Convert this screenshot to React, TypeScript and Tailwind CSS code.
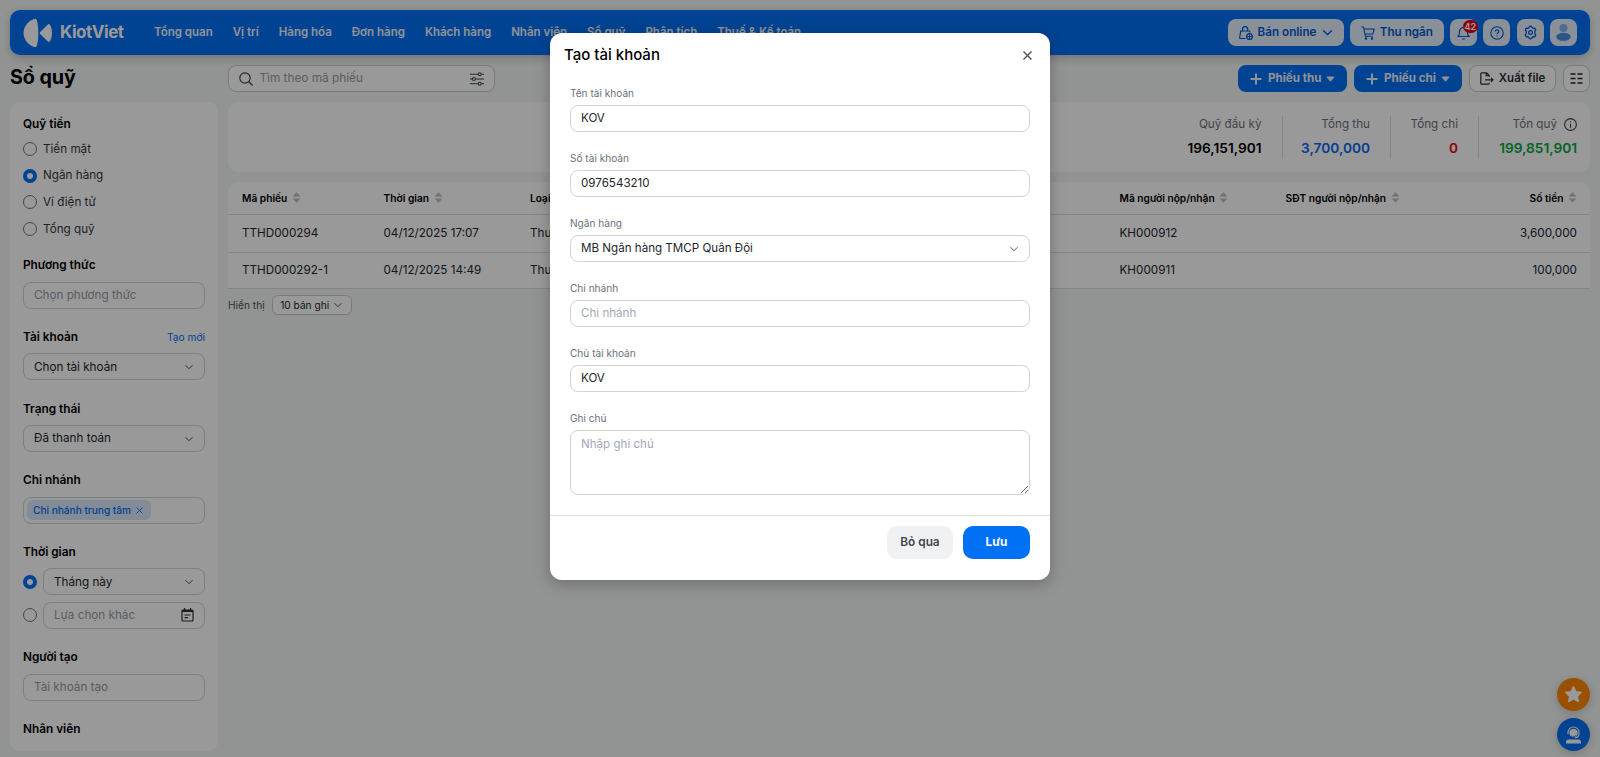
import React from "react";

const navItems = ["Tổng quan", "Vị trí", "Hàng hóa", "Đơn hàng", "Khách hàng", "Nhân viên", "Sổ quỹ", "Phân tích", "Thuế & Kế toán"];

function Chevron({ className = "" }: { className?: string }) {
  return (
    <svg className={"text-[#4b525b] " + className} viewBox="0 0 10 10" width="10" height="10" fill="none" stroke="currentColor" strokeWidth="1">
      <path d="M1.500 3.200 5 6.700l3.500-3.500" />
    </svg>
  );
}

function Logo() {
  return (
    <svg width="30" height="30" viewBox="0 0 30 30" fill="#fff">
      <path d="M12 .8c1 0 1.600.6 1.900 1.600C14.900 6 15.300 10.500 15.300 15s-.4 9-1.400 12.600c-.3 1-.9 1.600-1.900 1.600C6.200 28 .5 22 .5 15S6.200 2 12 .8z" />
      <path d="M17.200 13.900 24.600 6.700c.9-.8 1.900-.8 2.500.2 1.300 2.400 1.900 5.200 1.900 8.100s-.6 5.700-1.900 8.100c-.6 1-1.600 1-2.500.2l-7.400-7.200c-.6-.7-.6-1.500 0-2.200z" />
    </svg>
  );
}

function Sort() {
  return (
    <svg width="9" height="11" viewBox="0 0 9 11" fill="#b9bec5">
      <path d="M4.500.3 8.400 4.600H.6zM4.500 10.700.6 6.400h7.800z" />
    </svg>
  );
}

function Radio({ checked = false }: { checked?: boolean }) {
  return (
    <span
      className={
        checked
          ? "box-border h-[14px] w-[14px] shrink-0 rounded-full border-[4px] border-[#0070f4] bg-white"
          : "box-border h-[14px] w-[14px] shrink-0 rounded-full border border-[#6f7782]"
      }
    />
  );
}

function RadioRow({ label, checked = false }: { label: string; checked?: boolean }) {
  return (
    <div className="flex h-[26.700px] items-center gap-[6px]">
      <Radio checked={checked} />
      <span className="pt-[1px] text-[#33383f]">{label}</span>
    </div>
  );
}

const field = "flex h-[27px] items-center rounded-[8px] border border-[#cfd3d8] px-[10px]";

function Section({ title, action, children }: { title: string; action?: string; children?: React.ReactNode }) {
  return (
    <section className="mb-[18.970px]">
      <div className="mb-[7.700px] flex h-[18px] items-center justify-between pt-[2px]">
        <h3 className="text-[11.800px] font-semibold text-black">{title}</h3>
        {action && <a className="text-[10.200px] text-[#0070f4]">{action}</a>}
      </div>
      {children}
    </section>
  );
}

function HeaderButton({ children, className = "" }: { children: React.ReactNode; className?: string }) {
  return (
    <button className={"relative flex h-[27px] items-center justify-center rounded-[8px] bg-[#e6f1fe] text-[#0058d0] " + className}>
      {children}
    </button>
  );
}

function Header() {
  return (
    <header className="flex h-[45px] items-center rounded-[10px] bg-[#0070f4] px-[13px] shadow-[0_3px_10px_rgba(0,0,0,0.22)]">
      <Logo />
      <span className="ml-[7px] w-[64px] text-[17px] leading-none font-bold tracking-[-0.450px] text-white">KiotViet</span>
      <nav className="ml-[30px] flex gap-[20px] pt-[1px] text-[11.500px] font-semibold whitespace-nowrap text-[#f2f6fb]">
        {navItems.map((n) => (
          <span key={n}>{n}</span>
        ))}
      </nav>
      <div className="ml-auto flex gap-[6.300px] text-[11.670px] font-semibold">
        <HeaderButton className="w-[116px] gap-[5px]">
          <svg width="14" height="14" viewBox="0 0 14 14" fill="none" stroke="currentColor" strokeWidth="1.200">
            <path d="M6.500 12.500H1.600c-.6 0-1-.4-.9-1L1.700 5h8.900l.3 1.500M3.500 5V3.200a2.600 2.600 0 0 1 5.200 0V5" />
            <circle cx="10.500" cy="10.500" r="2.900" />
            <path d="M7.700 10.500h5.600M10.500 7.700v5.600" strokeWidth=".9" />
          </svg>
          <span className="w-[59px] pt-[1px] whitespace-nowrap">Bán online</span>
          <svg width="11" height="11" viewBox="0 0 11 11" fill="none" stroke="currentColor" strokeWidth="1.300">
            <path d="m1.200 3.500 4.300 4 4.300-4" />
          </svg>
        </HeaderButton>
        <HeaderButton className="w-[94px] gap-[5px]">
          <svg width="14" height="14" viewBox="0 0 14 14" fill="none" stroke="currentColor" strokeWidth="1.100">
            <path d="M.3 1h2.200l1.800 9.200h7.500M2.900 3h10.300l-1.300 5H4" />
            <circle cx="5" cy="12.500" r=".7" />
            <circle cx="11" cy="12.500" r=".7" />
          </svg>
          <span className="pt-[1px] whitespace-nowrap">Thu ngân</span>
        </HeaderButton>
        <HeaderButton className="w-[27px]">
          <svg width="13" height="14" viewBox="0 0 13 14" fill="none" stroke="currentColor" strokeWidth="1.200">
            <path d="M1 10.500c1-1 1.500-2 1.500-3.700V5.500a4 4 0 0 1 8 0v1.300c0 1.700.5 2.700 1.500 3.700zM5 13h3" />
          </svg>
          <span className="absolute top-[1px] left-[12.500px] flex h-[13px] w-[15.500px] items-center justify-center rounded-full bg-[#e5000f] text-[9px] font-bold text-white">42</span>
        </HeaderButton>
        <HeaderButton className="w-[27px]">
          <svg width="14" height="14" viewBox="0 0 14 14" fill="none" stroke="currentColor" strokeWidth="1.100">
            <circle cx="7" cy="7" r="6.200" />
            <path d="M5.200 5.600C5.200 4.500 6 3.900 7 3.900s1.800.7 1.800 1.600C8.800 6.800 7 6.800 7 8.300M7 9.400v1.100" />
          </svg>
        </HeaderButton>
        <HeaderButton className="w-[27px]">
          <svg width="15" height="15" viewBox="0 0 24 24" fill="none" stroke="currentColor" strokeWidth="2" strokeLinejoin="round">
            <path d="m9.300 4.500.9-2.300h3.600l.9 2.300 1.500.9 2.500-.4 1.800 3.100L18.900 10v4l1.600 1.900-1.800 3.100-2.500-.4-1.500.9-.9 2.300h-3.600l-.9-2.300-1.500-.9-2.500.4-1.800-3.100L5.100 14v-4L3.500 8.100 5.300 5l2.500.4z" />
            <circle cx="12" cy="12" r="3" />
          </svg>
        </HeaderButton>
        <HeaderButton className="w-[27px]">
          <svg width="17" height="19" viewBox="0 0 17 19">
            <circle cx="8.500" cy="5" r="4" fill="#84b4ee" />
            <ellipse cx="8.500" cy="13.800" rx="7.300" ry="4" fill="#4a90e2" />
          </svg>
        </HeaderButton>
      </div>
    </header>
  );
}

function Plus() {
  return (
    <svg width="12" height="12" viewBox="0 0 12 12" stroke="currentColor" strokeWidth="2">
      <path d="M6 .5v11M.5 6h11" />
    </svg>
  );
}

function Caret() {
  return (
    <svg width="9" height="6" viewBox="0 0 9 6" fill="currentColor" className="ml-auto">
      <path d="M.8.4h7.400c.4 0 .5.400.3.700L5 5.300c-.3.300-.7.300-1 0L.5 1.100C.3.800.4.400.8.400z" />
    </svg>
  );
}

function Toolbar() {
  const primary = "flex h-[27px] items-center rounded-[8px] bg-[#0070f4] px-[12px] text-[11.600px] font-bold whitespace-nowrap text-[#eef4fb]";
  return (
    <div className="mt-[10px] flex h-[27px] items-center">
      <h1 className="w-[218px] pb-[1px] text-[19.800px] leading-none font-bold tracking-[-0.100px] text-black">Sổ quỹ</h1>
      <div className="flex h-[27px] w-[267px] items-center rounded-[8px] border border-[#c8ccd1] bg-white px-[10px] text-[11.800px]">
        <svg width="14" height="14" viewBox="0 0 14 14" fill="none" stroke="#3f454d" strokeWidth="1.200">
          <circle cx="6" cy="6" r="5.200" />
          <path d="m9.800 9.800 3.800 3.700" />
        </svg>
        <span className="ml-[6.500px] pt-[1px] text-[#969ca5]">Tìm theo mã phiếu</span>
        <svg className="ml-auto" width="14" height="14" viewBox="0 0 14 14" fill="none" stroke="#3f454d" strokeWidth="1.100">
          <path d="M0 2.200h8M11.400 2.200H14M0 7h2.300M5.500 7H14M0 11.800h8M11.400 11.800H14" />
          <circle cx="9.700" cy="2.200" r="1.500" />
          <circle cx="3.900" cy="7" r="1.500" />
          <circle cx="9.700" cy="11.800" r="1.500" />
        </svg>
      </div>
      <div className="ml-auto flex gap-[7px]">
        <button className={primary + " w-[109px]"}>
          <Plus />
          <span className="ml-[6px]">Phiếu thu</span>
          <Caret />
        </button>
        <button className={primary + " w-[108px]"}>
          <Plus />
          <span className="ml-[6px]">Phiếu chi</span>
          <Caret />
        </button>
        <button className="flex h-[27px] w-[87px] items-center justify-center gap-[5px] rounded-[8px] border border-[#c8ccd1] bg-white text-[11.600px] font-semibold whitespace-nowrap text-[#2b3037]">
          <svg width="14" height="13" viewBox="0 0 14 13" fill="none" stroke="currentColor" strokeWidth="1.200">
            <path d="M9.200 4.800V3.400L6.600.8H1.800c-.6 0-1 .4-1 1v9.400c0 .6.400 1 1 1h6.400c.6 0 1-.4 1-1v-.5M6.200.8v2.900h3M5 7.800h8M11 5.800l2 2-2 2" />
          </svg>
          Xuất file
        </button>
        <button className="flex h-[27px] w-[27px] items-center justify-center rounded-[8px] border border-[#c8ccd1] bg-white">
          <svg width="13" height="11" viewBox="0 0 13 11" stroke="#22262b" strokeWidth="1.400">
            <path d="M.5 1H5.500M7.500 1h5M.5 5.500h5M7.500 5.500h5M.5 10h5M7.500 10h5" />
          </svg>
        </button>
      </div>
    </div>
  );
}

function Sidebar() {
  return (
    <aside className="h-[649px] w-[208px] overflow-hidden rounded-[10px] bg-white px-[13px] pt-[12.500px] text-[11.700px]">
      <section className="mb-[13.900px]">
        <h3 className="mb-[3px] h-[18px] text-[11.800px] leading-[18px] font-semibold text-black">Quỹ tiền</h3>
        <RadioRow label="Tiền mặt" />
        <RadioRow label="Ngân hàng" checked />
        <RadioRow label="Ví điện tử" />
        <RadioRow label="Tổng quỹ" />
      </section>
      <Section title="Phương thức">
        <div className={field + " text-[#969ca5]"}>
          <span className="pt-[1px]">Chọn phương thức</span>
        </div>
      </Section>
      <Section title="Tài khoản" action="Tạo mới">
        <div className={field + " justify-between text-[#22262b]"}>
          <span className="pt-[1px]">Chọn tài khoản</span>
          <Chevron />
        </div>
      </Section>
      <Section title="Trạng thái">
        <div className={field + " justify-between text-[#22262b]"}>
          <span className="pt-[1px]">Đã thanh toán</span>
          <Chevron />
        </div>
      </Section>
      <Section title="Chi nhánh">
        <div className="flex h-[27px] items-center rounded-[8px] border border-[#cfd3d8] pl-[3px]">
          <span className="flex h-[20px] w-[124px] items-center justify-between rounded-[6px] bg-[#d9e8fb] pr-[8px] pl-[6px] text-[10.100px] font-medium whitespace-nowrap text-[#0070f4]">
            Chi nhánh trung tâm
            <svg className="shrink-0" width="7" height="7" viewBox="0 0 7 7" stroke="currentColor" strokeWidth=".9">
              <path d="m.5.5 6 6M6.500.5l-6 6" />
            </svg>
          </span>
        </div>
      </Section>
      <Section title="Thời gian">
        <div className="flex items-center gap-[6px]">
          <Radio checked />
          <div className={field + " flex-1 justify-between text-[#22262b]"}>
            <span className="pt-[1px]">Tháng này</span>
            <Chevron />
          </div>
        </div>
        <div className="mt-[6.500px] flex items-center gap-[6px]">
          <Radio />
          <div className={field + " flex-1 justify-between text-[#969ca5]"}>
            <span className="pt-[1px]">Lựa chọn khác</span>
            <svg width="13" height="14" viewBox="0 0 13 14" fill="none" stroke="#2b3037" strokeWidth="1.200">
              <path d="M2 2h9c.6 0 1 .4 1 1v9c0 .6-.4 1-1 1H2c-.6 0-1-.4-1-1V3c0-.6.400-1 1-1zM3.500 0v3M9.500 0v3M3.500 7h6M3.500 9.700h3.500" />
              <path d="M1 3h11" strokeWidth="2" />
            </svg>
          </div>
        </div>
      </Section>
      <Section title="Người tạo">
        <div className={field + " text-[#969ca5]"}>
          <span className="pt-[1px]">Tài khoản tạo</span>
        </div>
      </Section>
      <Section title="Nhân viên" />
    </aside>
  );
}

function Summary() {
  const items = [
    { label: "Quỹ đầu kỳ", value: "196,151,901", box: "w-[120px] border-r pr-[20px]", color: "text-black" },
    { label: "Tổng thu", value: "3,700,000", box: "w-[108.500px] border-r pr-[20px]", color: "text-[#0a66f0]" },
    { label: "Tổng chi", value: "0", box: "w-[88px] border-r pr-[20px]", color: "text-[#f0000f]" },
    { label: "Tồn quỹ", value: "199,851,901", box: "w-[111px] pr-[13px]", color: "text-[#00a83a]" },
  ];
  return (
    <div className="flex h-[70px] items-center justify-end rounded-[10px] bg-white">
      {items.map((i) => (
        <div key={i.label} className={"flex h-[43px] flex-col items-end justify-between border-[#dcdfe3] " + i.box}>
          <div className="flex h-[17px] items-center gap-[7px] text-[11.700px] whitespace-nowrap text-[#6b727c]">
            <span className="pt-[1px]">{i.label}</span>
            {i.label === "Tồn quỹ" && (
              <svg width="13" height="13" viewBox="0 0 13 13" fill="none" stroke="#3f454d" strokeWidth="1.100">
                <circle cx="6.500" cy="6.500" r="5.900" />
                <path d="M6.500 5.700v4M6.500 3.200v1.300" />
              </svg>
            )}
          </div>
          <div className={"h-[21px] text-[13.700px] leading-[20px] font-semibold " + i.color}>{i.value}</div>
        </div>
      ))}
    </div>
  );
}

function Table() {
  const grid = "grid grid-cols-[141.500px_146.500px_589.500px_166px_150px_1fr] items-center border-b border-[#d9dde0] bg-white pr-[13px] pl-[14px] whitespace-nowrap";
  const rows = [
    ["TTHD000294", "04/12/2025 17:07", "Thu tiền khách trả", "KH000912", "", "3,600,000"],
    ["TTHD000292-1", "04/12/2025 14:49", "Thu tiền khách trả", "KH000911", "", "100,000"],
  ];
  const heads = ["Mã phiếu", "Thời gian", "Loại thu chi", "Mã người nộp/nhận", "SĐT người nộp/nhận", "Số tiền"];
  return (
    <div className="mt-[10px] text-[11.700px] text-[#22262b]">
      <div className={grid + " h-[33px] rounded-t-[10px] text-[10.200px] font-semibold text-black"}>
        {heads.map((h) => (
          <span key={h} className={"flex items-center gap-[4.500px] " + (h === "Số tiền" ? "justify-self-end" : "")}>
            <span className="pt-[2px]">{h}</span>
            <Sort />
          </span>
        ))}
      </div>
      {rows.map((r, k) => (
        <div key={r[0]} className={grid + (k === 0 ? " h-[37.500px]" : " h-[36px]")}>
          {r.map((cell, c) => (
            <span key={c} className={c === 5 ? "pt-[2px] text-right" : "pt-[2px]"}>
              {cell}
            </span>
          ))}
        </div>
      ))}
      <div className="mt-[6.500px] flex items-center gap-[7px] text-[10.200px]">
        <span className="pt-[1px] text-[#4b525b]">Hiển thị</span>
        <span className="flex h-[20px] w-[80px] items-center justify-center gap-[4px] rounded-[6px] border border-[#c8ccd1] bg-white">
          <span className="pt-[1px]">10 bản ghi</span>
          <Chevron />
        </span>
      </div>
    </div>
  );
}

function FormField({ label, value, placeholder, select = false }: { label: string; value?: string; placeholder?: string; select?: boolean }) {
  return (
    <div className="h-[65px]">
      <div className="h-[20px] text-[10.100px] leading-[16px] text-[#6b727c]">{label}</div>
      <div className={field + " justify-between text-[11.600px] " + (value ? "text-[#22262b]" : "text-[#a3a9b3]")}>
        <span className="pt-[1px]">{value ?? placeholder}</span>
        {select && <Chevron />}
      </div>
    </div>
  );
}

function Dialog() {
  return (
    <div role="dialog" className="h-[546.500px] w-[500px] rounded-[12px] bg-white shadow-[0_4px_16px_rgba(0,0,0,0.25)]">
      <div className="flex h-[44px] items-center justify-between pr-[18px] pl-[14px]">
        <h2 className="text-[15px] font-medium text-black">Tạo tài khoản</h2>
        <svg width="9" height="9" viewBox="0 0 9 9" stroke="#4b525b" strokeWidth="1.400">
          <path d="m.5.5 8 8M8.500.5l-8 8" />
        </svg>
      </div>
      <div className="h-[439px] border-b border-[#dfe2e5] px-[20px] pt-[8px]">
        <FormField label="Tên tài khoản" value="KOV" />
        <FormField label="Số tài khoản" value="0976543210" />
        <FormField label="Ngân hàng" value="MB Ngân hàng TMCP Quân Đội" select />
        <FormField label="Chi nhánh" placeholder="Chi nhánh" />
        <FormField label="Chủ tài khoản" value="KOV" />
        <div className="h-[20px] text-[10.100px] leading-[16px] text-[#6b727c]">Ghi chú</div>
        <textarea
          placeholder="Nhập ghi chú"
          className="block h-[65px] w-[460px] rounded-[8px] border border-[#cfd3d8] px-[10px] py-[4px] text-[11.600px] leading-[18px] placeholder:text-[#a3a9b3]"
        />
      </div>
      <div className="flex justify-end gap-[10px] px-[20px] pt-[10px] text-[11.800px]">
        <button className="h-[33px] w-[66px] rounded-[10px] bg-[#f0f1f3] pt-[1px] font-semibold text-[#3f454d]">Bỏ qua</button>
        <button className="h-[33px] w-[67px] rounded-[10px] bg-[#0070f4] pt-[1px] font-bold text-white">Lưu</button>
      </div>
    </div>
  );
}

export default function App() {
  return (
    <div className="relative h-[757px] w-[1600px] overflow-hidden bg-[#f4f7f5] font-['Inter','Noto_Sans',sans-serif] leading-normal">
      <div className="p-[10px]">
        <Header />
        <Toolbar />
        <div className="mt-[10px] flex gap-[10px]">
          <Sidebar />
          <main className="flex-1">
            <Summary />
            <Table />
          </main>
        </div>
      </div>
      <div className="absolute right-[10px] bottom-[6px] flex flex-col gap-[7px]">
        <div className="flex h-[33px] w-[33px] items-center justify-center rounded-full bg-[#ff8800] shadow-[0_2px_10px_rgba(0,0,0,0.2)]">
          <svg width="19" height="19" viewBox="0 0 24 24" fill="#fff" stroke="#fff" strokeWidth="1.500" strokeLinejoin="round">
            <path d="m12 2 3.100 6.300 6.900 1-5 4.900 1.200 6.800L12 17.800 5.800 21 7 14.200 2 9.300l6.900-1z" />
          </svg>
        </div>
        <div className="flex h-[33px] w-[33px] items-center justify-center rounded-full bg-[#0070f4] shadow-[0_2px_10px_rgba(0,0,0,0.2)]">
          <svg width="17" height="18" viewBox="0 0 17 18" fill="none">
            <path d="M1 17.500v-1.300c0-1.600 1.200-2.700 2.800-2.700h9.400c1.600 0 2.800 1.100 2.800 2.700v1.300z" fill="#fff" />
            <circle cx="8.500" cy="7" r="4.200" fill="#fff" />
            <path d="M3 8V6.500a5.500 5.500 0 0 1 11 0V8c0 2-1.500 3.500-4 3.700" stroke="#fff" strokeWidth="1.200" />
            <path d="M6 10c1.500 1 3.500 1 5-.5" stroke="#0070f4" strokeWidth=".8" />
          </svg>
        </div>
      </div>
      <div className="absolute inset-0 flex items-start justify-center bg-black/40 pt-[33px]">
        <Dialog />
      </div>
    </div>
  );
}
